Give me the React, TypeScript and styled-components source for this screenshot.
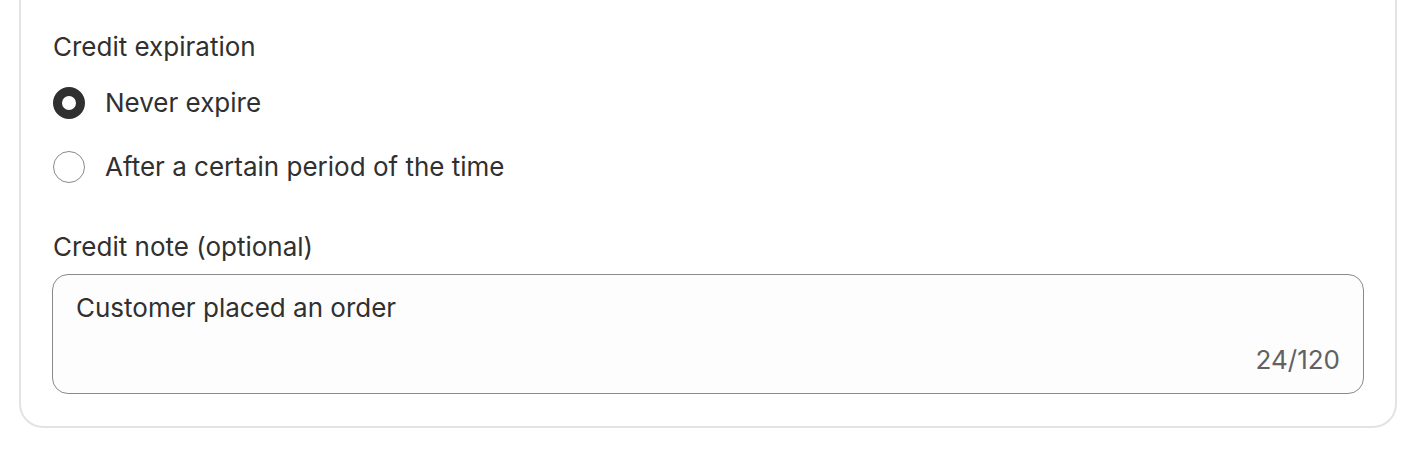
import React, { useState } from "react";
import styled, { createGlobalStyle } from "styled-components";

const Global = createGlobalStyle`
  html, body { margin: 0; padding: 0; background: #ffffff; overflow: hidden; }
  body { font-family: Inter, "Noto Sans", sans-serif; color: #303030; }
  * { box-sizing: border-box; }
`;

const Page = styled.div`
  padding: 0 23px 0 19px;
  height: 454px;
  overflow: hidden;
`;

const Card = styled.div`
  margin-top: -40px;
  border: 2px solid #e3e3e3;
  border-top-width: 0;
  border-radius: 0 0 24px 24px;
  padding: 71px 31px 32px 31px;
  background: #ffffff;
  display: flex;
  flex-direction: column;
`;

const Label = styled.div`
  font-size: 26px;
  line-height: 32px;
  color: #303030;
  padding-left: 1px;
`;

const RadioGroup = styled.div`
  display: flex;
  flex-direction: column;
  gap: 32px;
  margin-top: 24px;
  padding-left: 1px;
`;

const RadioRow = styled.label`
  display: flex;
  align-items: center;
  gap: 20px;
  cursor: pointer;
  height: 32px;
`;

const RadioCircle = styled.span<{ $checked: boolean }>`
  width: 32px;
  height: 32px;
  border-radius: 50%;
  flex: none;
  background: #ffffff;
  border: ${(p) => (p.$checked ? "9.5px solid #303030" : "1.5px solid #8a8a8a")};
`;

const RadioText = styled.span`
  font-size: 26px;
  line-height: 32px;
  color: #303030;
`;

const NoteLabel = styled(Label)`
  margin-top: 48px;
`;

const Field = styled.div`
  margin-top: 11px;
  height: 120px;
  border: 1.5px solid #8a8a8a;
  border-radius: 16px;
  background: #fdfdfd;
  padding: 17px 23px 17px 23px;
  display: flex;
  flex-direction: column;
`;

const Input = styled.textarea`
  flex: 1;
  border: none;
  outline: none;
  resize: none;
  background: transparent;
  font-family: Inter, "Noto Sans", sans-serif;
  font-size: 26px;
  line-height: 32px;
  color: #303030;
  padding: 0;
  margin: 0;
  overflow: hidden;
`;

const Counter = styled.div`
  align-self: flex-end;
  font-size: 26px;
  line-height: 32px;
  color: #616161;
`;

export default function App() {
  const [choice, setChoice] = useState("never");
  const [note, setNote] = useState("Customer placed an order");
  const options = [
    { id: "never", label: "Never expire" },
    { id: "period", label: "After a certain period of the time" },
  ];
  return (
    <Page>
      <Global />
      <Card>
        <Label>Credit expiration</Label>
        <RadioGroup>
          {options.map((o) => (
            <RadioRow key={o.id} onClick={() => setChoice(o.id)}>
              <RadioCircle $checked={choice === o.id} />
              <RadioText>{o.label}</RadioText>
            </RadioRow>
          ))}
        </RadioGroup>
        <NoteLabel>Credit note (optional)</NoteLabel>
        <Field>
          <Input value={note} onChange={(e) => setNote(e.target.value)} rows={1} />
          <Counter>{note.length}/120</Counter>
        </Field>
      </Card>
    </Page>
  );
}
